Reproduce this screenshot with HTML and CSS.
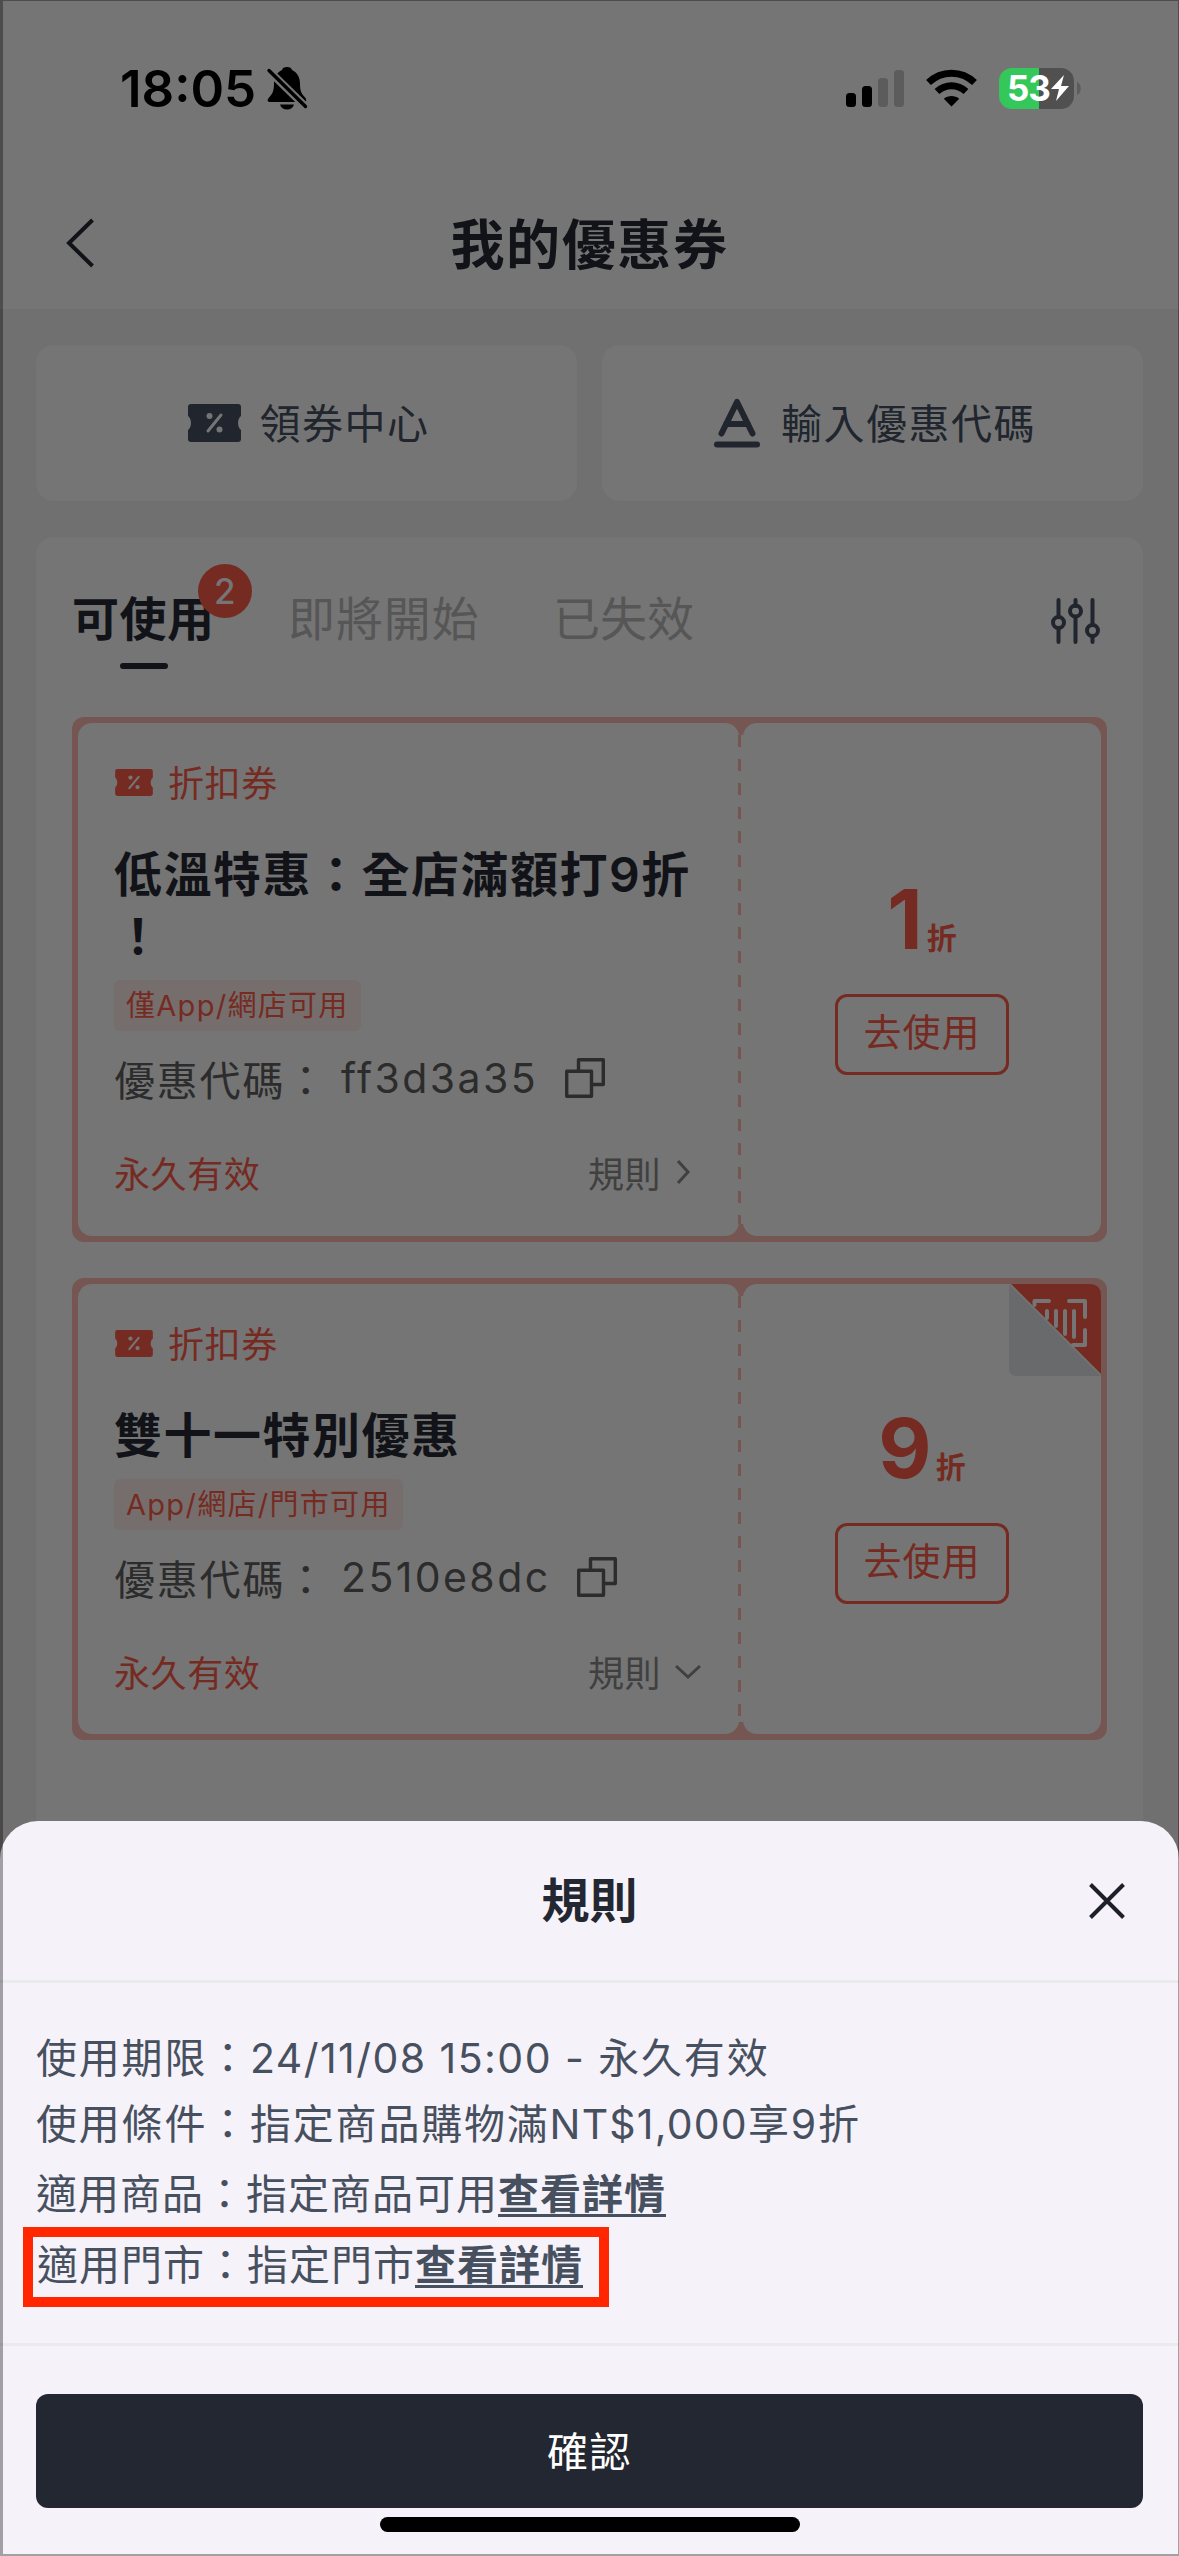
FILE: index.html
```html
<!DOCTYPE html>
<html lang="zh-Hant">
<head>
<meta charset="utf-8">
<title>我的優惠券</title>
<link rel="stylesheet" href="styles.css">
</head>
<body>
<svg class="defs" aria-hidden="true">
  <symbol id="ticket" viewBox="0 0 53 38">
    <path fill="currentColor" d="M3 0H50Q53 0 53 3V12C49 15 49 23 53 26V35Q53 38 50 38H3Q0 38 0 35V26C4 23 4 15 0 12V3Q0 0 3 0Z"/>
    <path d="M33 11L20 27" stroke="#757575" stroke-width="3" stroke-linecap="round"/>
    <circle cx="21.500" cy="12" r="3" fill="#757575"/><circle cx="31.500" cy="25.500" r="3" fill="#757575"/>
  </symbol>
  <symbol id="copy" viewBox="0 0 40 40">
    <g fill="none" stroke="currentColor" stroke-width="3.400" stroke-linejoin="round">
      <path d="M1.700 13.200H26.500V38.300H1.700Z"/><path d="M13.500 13V1.700H38.300V26.500H27"/>
    </g>
  </symbol>
</svg>
<div class="screen">
  <header class="header">
    <div class="status">
      <span class="clock">18:05</span>
      <svg class="bell" viewBox="0 0 40 42">
        <path d="M20 0C23 0 24.500 1 25 3C31 6 33 11 33 17C33 25 35 27 38.500 31C40 34 39 35 37 35H3C1 35 0 34 1 32C4 28 7 26 7 17C7 11 9 6 15 3C15.500 1 17 0 20 0Z"/>
        <path d="M13 37.500H27C26 41 23.500 42.500 20 42.500S14 41 13 37.500Z"/>
        <path d="M-1 1L41 42" stroke="#757575" stroke-width="8"/>
        <path d="M2 3.500L38.500 39.500" stroke="#000" stroke-width="3.400" stroke-linecap="round"/>
      </svg>
      <svg class="signal" viewBox="0 0 58 38">
        <rect x="0" y="24" width="10" height="14" rx="3.500"/><rect x="16" y="17" width="10" height="21" rx="3.500"/>
        <rect x="32" y="9" width="10" height="29" rx="3.500" fill="#5c5c5c"/><rect x="48" y="1" width="10" height="37" rx="3.500" fill="#5c5c5c"/>
      </svg>
      <svg class="wifi" viewBox="0 0 51 38">
        <path d="M25.500 37.500L17.800 29.700C22 26 29 26 33.200 29.700Z"/>
        <path d="M11 22.500C19.500 14.800 31.500 14.800 40 22.500" fill="none" stroke="#000" stroke-width="7"/>
        <path d="M2.500 13.500C15.500 1 35.500 1 48.500 13.500" fill="none" stroke="#000" stroke-width="7"/>
      </svg>
      <span class="battery">53<svg class="bolt" viewBox="0 0 18 26"><path fill="#fff" d="M13 0L0 14H8L5 26L18 11H10Z"/></svg></span>
      <svg class="nub" viewBox="0 0 4 13"><path d="M0 0C5 2 5 11 0 13Z" fill="#5c5c5c"/></svg>
    </div>
    <div class="navbar">
      <svg class="back" viewBox="0 0 30 50"><path d="M26.500 2L3 25L26.500 48" fill="none" stroke="#111318" stroke-width="4"/></svg>
      <h1 class="title">我的優惠券</h1>
    </div>
  </header>
  <main class="content">
    <nav class="shortcuts">
      <a class="shortcut"><svg class="ticket-lg"><use href="#ticket"/></svg><span>領券中心</span></a>
      <a class="shortcut code-entry"><svg class="letter" viewBox="0 0 48 50"><path d="M8.500 35.500L24 4L39.500 35.500M13 26H35" fill="none" stroke="currentColor" stroke-width="6" stroke-linecap="round" stroke-linejoin="round"/><rect x="1" y="43.500" width="46" height="6" rx="3" fill="currentColor"/></svg><span>輸入優惠代碼</span></a>
    </nav>
    <section class="panel">
      <div class="tabs">
        <span class="tab active">可使用<b class="count">2</b></span>
        <span class="tab soon">即將開始</span>
        <span class="tab expired">已失效</span>
        <svg class="filter" viewBox="0 0 50 46"><g fill="none" stroke="currentColor" stroke-width="4" stroke-linecap="round"><path d="M7.500 2V18M7.500 31V44M24.500 2V8M24.500 20V44M41.500 2V27M41.500 39V44"/><circle cx="7.500" cy="24.500" r="5.500"/><circle cx="24.500" cy="13" r="5.500"/><circle cx="41.500" cy="32.500" r="5.500"/></g></svg>
      </div>
      <article class="coupon tall">
        <div class="info">
          <div class="kind"><svg class="ticket-sm"><use href="#ticket"/></svg><span>折扣券</span></div>
          <h2 class="name">低溫特惠：全店滿額打<span class="digit">9</span>折<br>！</h2>
          <span class="tag">僅App/網店可用</span>
          <div class="code"><span>優惠代碼：</span><span class="value">ff3d3a35</span><svg class="copy"><use href="#copy"/></svg></div>
          <div class="foot"><span class="valid">永久有效</span><span class="rule">規則</span><svg class="chev" viewBox="0 0 28 28"><path d="M5 3L15 14L5 25" fill="none" stroke="currentColor" stroke-width="3"/></svg></div>
        </div>
        <div class="action"><div class="rate"><b>1</b><small>折</small></div><a class="use">去使用</a></div>
      </article>
      <article class="coupon">
        <div class="info">
          <div class="kind"><svg class="ticket-sm"><use href="#ticket"/></svg><span>折扣券</span></div>
          <h2 class="name">雙十一特別優惠</h2>
          <span class="tag">App/網店/門市可用</span>
          <div class="code"><span>優惠代碼：</span><span class="value">2510e8dc</span><svg class="copy"><use href="#copy"/></svg></div>
          <div class="foot"><span class="valid">永久有效</span><span class="rule">規則</span><svg class="chev" viewBox="0 0 28 28"><path d="M3 9L15 20L27 9" fill="none" stroke="currentColor" stroke-width="3"/></svg></div>
        </div>
        <div class="action"><div class="rate"><b>9</b><small>折</small></div><a class="use">去使用</a>
          <svg class="corner" viewBox="0 0 92 92"><path d="M0 0L92 92H8Q0 92 0 84Z" fill="#686a6b"/><path d="M2 0H80Q92 0 92 12V90Z" fill="#752b22"/>
            <g fill="none" stroke="#757575" stroke-width="4" stroke-linecap="round" stroke-linejoin="round"><path d="M25.500 21V17H40M60 17H76V33M76 46V61H64M38 27V34M47 27V42M56 27V50M65 27V53"/></g></svg>
        </div>
      </article>
    </section>
  </main>
  <section class="sheet">
    <div class="sheet-head"><h2 class="sheet-title">規則</h2><svg class="close" viewBox="0 0 36 36"><path d="M1.500 1.500L34.500 34.500M34.500 1.500L1.500 34.500" stroke="#1d2029" stroke-width="4"/></svg></div>
    <div class="rules">
      <p>使用期限：<span class="dates">24/11/08 15:00 - </span>永久有效</p>
      <p>使用條件：指定商品購物滿<span class="amount">NT$1,000</span>享9折</p>
      <p class="scope">適用商品：指定商品可用<a>查看詳情</a></p>
      <p class="scope marked">適用門市：指定門市<a>查看詳情</a></p>
    </div>
    <div class="sheet-foot"><button class="confirm">確認</button><div class="home"></div></div>
  </section>
</div>
</body>
</html>
```
FILE: styles.css
```css
* { box-sizing: border-box; }
body { margin: 0; font-family: Inter, "Noto Sans CJK TC", sans-serif; }
h1, h2, p { margin: 0; }
svg { display: block; flex: none; }
span, b, small, a { white-space: nowrap; }
.defs { position: absolute; width: 0; height: 0; }

.screen { position: relative; width: 1179px; height: 2556px; overflow: hidden; background: #707070; color: #111318; }
.screen::after { content: ""; position: absolute; inset: 0; border: solid rgba(0, 0, 0, .34); border-width: 1px 1px 2px 3px; }

.header { height: 309px; background: #757575; }
.status { display: flex; height: 176px; padding: 0 98px 0 120px; align-items: center; color: #000; }
.clock { width: 147px; font-size: 51px; font-weight: 600; }
.bell { width: 40px; height: 42px; overflow: visible; }
.signal { width: 58px; height: 38px; margin-left: auto; }
.wifi { width: 51px; height: 38px; margin-left: 22px; }
.battery { display: flex; align-items: center; width: 75px; height: 41px; margin-left: 22px; padding-left: 8px; border-radius: 13px; background: linear-gradient(90deg, #34c759 53%, #505050 53%); color: #fff; font-size: 35px; font-weight: 700; letter-spacing: -1px; }
.bolt { width: 18px; height: 26px; margin-left: 1px; }
.nub { width: 4px; height: 13px; margin-left: 3px; }
.navbar { display: grid; grid-template-columns: 94px 1fr 94px; align-items: center; height: 134px; }
.back { width: 30px; height: 50px; margin-left: 66px; }
.title { padding-top: 5px; text-align: center; font-size: 54px; line-height: 76px; font-weight: 700; letter-spacing: 1.600px; }

.content { padding: 36px 36px 0; }
.shortcuts { display: grid; grid-template-columns: 541px 541px; gap: 25px; margin-bottom: 36px; }
.shortcut { display: flex; align-items: center; justify-content: center; gap: 19px; height: 156px; padding-left: 4px; border-radius: 18px; background: #757575; color: #20252e; font-size: 41px; letter-spacing: 1.500px; }
.shortcut span { padding-bottom: 4px; }
.code-entry { gap: 20px; }
.ticket-lg { width: 53px; height: 38px; }
.letter { width: 48px; height: 50px; }
.panel { height: 1300px; padding: 0 36px; border-radius: 18px; background: #757575; }
.tabs { display: flex; height: 180px; padding-top: 46px; }
.tab { position: relative; width: 216px; height: 72px; line-height: 72px; font-size: 47px; color: #565656; }
.tab.active { color: #111318; font-weight: 700; letter-spacing: .500px; }
.tab.active::after { content: ""; position: absolute; left: 48px; top: 80px; width: 48px; height: 6px; border-radius: 3px; background: #111318; }
.soon { width: 265px; letter-spacing: .900px; }
.count { position: absolute; left: 126px; top: -19px; width: 54px; height: 54px; border-radius: 50%; background: #752b22; color: #757575; font-size: 35px; font-weight: 500; line-height: 54px; text-align: center; }
.filter { width: 50px; height: 46px; margin: 15px 6px 0 auto; color: #20252e; }

.coupon { position: relative; display: flex; width: 1035px; height: 462px; padding: 6px; gap: 4px; border-radius: 12px; background: #765652; }
.tall { height: 525px; margin-bottom: 36px; }
.coupon::before { content: ""; position: absolute; left: 666px; top: 18px; bottom: 18px; width: 5px; background: linear-gradient(90deg, transparent 3px, #757575 3px), repeating-linear-gradient(180deg, #765652 0 12px, #757575 12px 24px); }
.info { display: flex; flex-direction: column; align-items: flex-start; width: 661px; padding: 33px 0 0 36px; border-radius: 14px; background: #757575; }
.kind { display: flex; align-items: center; gap: 15px; height: 52px; color: #752b22; font-size: 36px; letter-spacing: .600px; }
.kind span { padding-bottom: 3px; }
.ticket-sm { width: 38px; height: 27px; margin-left: 1px; }
.name { margin-top: 36px; font-size: 48px; line-height: 62px; font-weight: 700; letter-spacing: 1.500px; }
.digit { font-weight: 600; }
.tag { height: 51px; margin-top: 12px; padding: 0 12px; border-radius: 6px; background: #766e6d; color: #752b22; font-size: 29px; line-height: 52px; letter-spacing: 1.300px; }
.code { display: flex; align-items: center; height: 60px; margin-top: 17px; color: #2c2c2c; font-size: 41px; letter-spacing: 1.800px; }
.value { margin-left: 13px; letter-spacing: 2.400px; }
.copy { width: 40px; height: 40px; margin-left: 27px; }
.foot { display: flex; align-items: center; width: 100%; height: 52px; margin-top: 38px; font-size: 36px; letter-spacing: .600px; }
.valid { width: 474px; color: #752b22; }
.rule, .chev { color: #404040; }
.chev { width: 28px; height: 28px; margin-left: 12px; }
.action { position: relative; display: flex; flex-direction: column; align-items: center; justify-content: center; width: 358px; border-radius: 14px; background: #757575; color: #752b22; }
.rate { height: 109px; line-height: 70px; }
.rate b { font-size: 82px; font-weight: 650; letter-spacing: 0; }
.rate small { margin-left: 4px; font-size: 30px; font-weight: 700; }
.use { display: flex; justify-content: center; width: 174px; height: 81px; border: 3px solid #752b22; border-radius: 12px; font-size: 38px; line-height: 71px; letter-spacing: 1px; }
.corner { position: absolute; right: 0; top: 0; width: 92px; height: 92px; }

.sheet { position: absolute; left: 0; right: 0; top: 1821px; height: 735px; border-radius: 38px 38px 0 0; background: #f6f2fa; color: #47505f; }
.sheet-head { display: grid; grid-template-columns: 90px 1fr 90px; align-items: center; height: 162px; border-bottom: 3px solid #e9ebec; }
.sheet-title { grid-column: 2; padding-bottom: 7px; text-align: center; color: #232731; font-size: 48px; }
.close { width: 36px; height: 36px; }
.rules { display: flex; flex-direction: column; height: 363px; padding: 42px 36px 0; font-size: 41px; letter-spacing: 1.800px; border-bottom: 3px solid #e9ebec; }
.rules p { height: 66px; line-height: 66px; white-space: pre; }
.rules span { white-space: pre; }
.dates { letter-spacing: 1.450px; }
.amount { letter-spacing: 1.200px; }
.rules .scope { height: 72px; line-height: 74px; letter-spacing: 1px; }
.rules a { font-weight: 700; text-decoration: underline; text-decoration-thickness: 3px; text-underline-offset: 5px; }
.rules .marked { width: 586px; height: 80px; margin: -2px 0 0 -13px; padding-left: 4px; border: 10px solid #ff2600; line-height: 56px; }
.sheet-foot { display: flex; flex-direction: column; align-items: center; padding-top: 48px; }
.confirm { width: 1107px; height: 114px; padding: 0 0 4px; border: 0; border-radius: 12px; background: #232731; color: #fff; font: inherit; font-size: 41px; letter-spacing: 1.500px; }
.home { width: 420px; height: 15px; margin-top: 9px; border-radius: 8px; background: #000; }
```
